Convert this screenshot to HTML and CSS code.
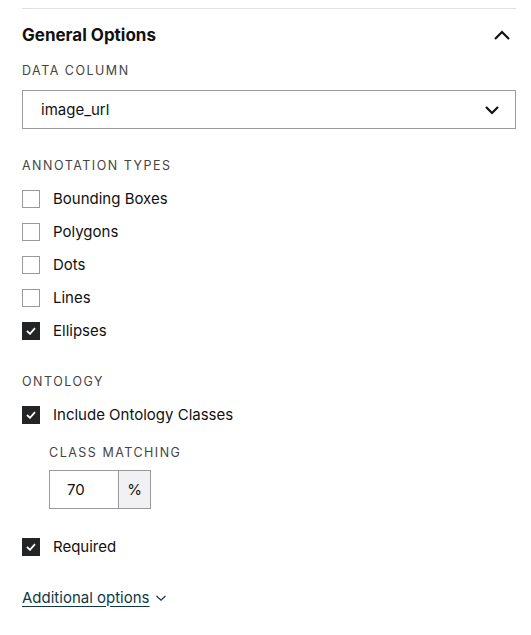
FILE: index.html
```html
<!DOCTYPE html>
<html lang="en">

<head>
    <meta charset="UTF-8" />
    <meta name="viewport" content="width=device-width, initial-scale=1.0" />
    <title>General Options</title>
    <link rel="stylesheet" href="styles.css">
</head>

<body>
    <div class="panel">
        <div class="panel-head">
            <h2>General Options</h2>
            <svg class="chevron-up" width="18" height="12" viewBox="0 0 18 12">
                <path d="M2 10 L9 3 L16 10" fill="none" stroke="#111" stroke-width="2.2" />
            </svg>
        </div>

        <div class="section section-column">
            <div class="caps">Data Column</div>
            <div class="select">
                <span>image_url</span>
                <svg width="16" height="10" viewBox="0 0 16 10">
                    <path d="M2 2 L8 8 L14 2" fill="none" stroke="#111" stroke-width="2.2" />
                </svg>
            </div>
        </div>

        <div class="section">
            <div class="caps">Annotation Types</div>
            <div class="checks">
                <label class="check"><span class="box"></span>Bounding Boxes</label>
                <label class="check"><span class="box"></span>Polygons</label>
                <label class="check"><span class="box"></span>Dots</label>
                <label class="check"><span class="box"></span>Lines</label>
                <label class="check"><span class="box on"><svg width="10" height="8" viewBox="0 0 10 8"><path d="M1 4 L4 6.8 L9 1.2" fill="none" stroke="#fff" stroke-width="1.8" /></svg></span>Ellipses</label>
            </div>
        </div>

        <div class="section section-ontology">
            <div class="caps">Ontology</div>
            <div class="checks">
                <label class="check"><span class="box on"><svg width="10" height="8" viewBox="0 0 10 8"><path d="M1 4 L4 6.8 L9 1.2" fill="none" stroke="#fff" stroke-width="1.8" /></svg></span>Include Ontology Classes</label>
            </div>
            <div class="sub">
                <div class="caps">Class Matching</div>
                <div class="percent">
                    <span class="num">70</span>
                    <span class="unit">%</span>
                </div>
            </div>
        </div>

        <div class="section section-required">
            <label class="check"><span class="box on"><svg width="10" height="8" viewBox="0 0 10 8"><path d="M1 4 L4 6.8 L9 1.2" fill="none" stroke="#fff" stroke-width="1.8" /></svg></span>Required</label>
        </div>

        <div class="more-row">
            <a class="more" href="#">Additional options</a>
            <svg class="more-icon" width="12" height="8" viewBox="0 0 12 8">
                <path d="M1.5 2 L6 6.2 L10.5 2" fill="none" stroke="#0e3a48" stroke-width="1.2" />
            </svg>
        </div>
    </div>
</body>

</html>
```

FILE: styles.css
```css
body {
    margin: 0;
    font-family: Inter, "Noto Sans", sans-serif;
    color: #111;
    background: #fff;
}

.panel {
    margin: 8px 15px 0 22px;
    border-top: 1px solid #e0e0e0;
}

.panel-head {
    display: flex;
    justify-content: space-between;
    align-items: center;
    height: 50px;
    padding-top: 1px;
}

.panel-head h2 {
    margin: 0;
    font-size: 17px;
    font-weight: 700;
}

.chevron-up {
    margin-right: 5px;
}

.caps {
    font-size: 12.5px;
    letter-spacing: 1.5px;
    text-transform: uppercase;
    color: #444;
    height: 22px;
    line-height: 22px;
}

.section {
    margin-bottom: 24px;
}

.section-column {
    margin-bottom: 26px;
}

.section-ontology {
    margin-bottom: 21px;
}

.section-required {
    margin-bottom: 24px;
}

.select {
    margin-top: 8px;
    height: 37px;
    border: 1px solid #9a9a9a;
    display: flex;
    justify-content: space-between;
    align-items: center;
    padding: 0 15px 0 18px;
    font-size: 15px;
}

.checks {
    margin-top: 5px;
}

.check {
    display: flex;
    align-items: center;
    gap: 13px;
    height: 33px;
    font-size: 15px;
}

.box {
    width: 16px;
    height: 16px;
    border: 1px solid #999;
    display: flex;
    align-items: center;
    justify-content: center;
}

.box.on {
    background: #222426;
    border-color: #222426;
}

.sub {
    margin-left: 27px;
    margin-top: 11px;
}

.percent {
    display: flex;
    margin-top: 6px;
    width: 100px;
    height: 37px;
    border: 1px solid #9a9a9a;
    font-size: 15px;
}

.num {
    flex: 1;
    display: flex;
    align-items: center;
    padding-left: 17px;
}

.unit {
    width: 31px;
    border-left: 1px solid #9a9a9a;
    background: #f1f1f3;
    display: flex;
    align-items: center;
    justify-content: center;
}

.more-row {
    display: flex;
    align-items: center;
    height: 20px;
}

.more {
    font-size: 15px;
    color: #0e3a48;
    text-decoration: underline;
    text-underline-offset: 3px;
}

.more-icon {
    margin-left: 5px;
    margin-top: 1px;
}
```
